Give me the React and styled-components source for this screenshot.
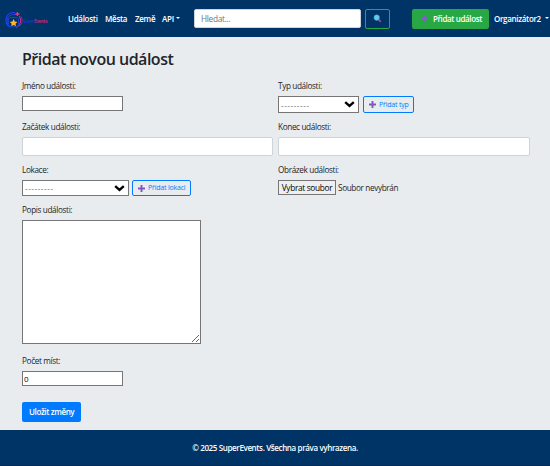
import React from "react";
import styled, { createGlobalStyle } from "styled-components";

const GlobalStyle = createGlobalStyle`
  * { box-sizing: border-box; }
  body {
    margin: 0;
    background: #e9ecef;
    color: #212529;
    font-family: "Open Sans", "Noto Sans", sans-serif;
    font-size: 8px;
    line-height: 12px;
  }
  input, select, textarea, button { font: inherit; margin: 0; }
`;

const Page = styled.div`
  display: flex;
  flex-direction: column;
  height: 466px;
  overflow: hidden;
`;

const Navbar = styled.nav`
  display: flex;
  align-items: center;
  height: 37px;
  flex: none;
  padding-left: 4px;
  background: #003366;
  white-space: nowrap;
`;

const Logo = styled.svg`
  width: 46px;
  height: 20px;
  margin-right: 18px;
  flex: none;
`;

const NavLinks = styled.div`
  display: flex;
  width: 126px;
  flex: none;
`;

const NavLink = styled.a`
  width: ${(p) => p.$width}px;
  flex: none;
  color: #fff;
  font-weight: 600;
  letter-spacing: ${(p) => p.$spacing || 0}px;
`;

const UserMenu = styled(NavLink)`
  margin-left: 5px;
`;

const Caret = styled.span`
  display: inline-block;
  margin-left: ${(p) => p.$gap}px;
  vertical-align: 2.5px;
  border: 2.4px solid transparent;
  border-top-color: #fff;
  border-bottom: 0;
`;

const SearchInput = styled.input`
  width: 167px;
  height: 19px;
  flex: none;
  padding: 0 6px;
  border: 1px solid #ced4da;
  border-radius: 2px;
  font-size: 8.3px;
  letter-spacing: -0.3px;
  &::placeholder { color: #6c757d; opacity: 1; }
`;

const SearchButton = styled.button`
  display: flex;
  align-items: center;
  justify-content: center;
  width: 25px;
  height: 20px;
  margin: 0 22px 0 4px;
  padding: 0;
  flex: none;
  background: transparent;
  border: 1px solid #28a745;
  border-radius: 2px;
`;

const Button = styled.button`
  display: flex;
  align-items: center;
  width: ${(p) => p.$width}px;
  height: 20px;
  padding: 0 0 0 ${(p) => p.$inset}px;
  flex: none;
  gap: 4px;
  border: 0;
  border-radius: 2px;
  background: ${(p) => p.$color};
  color: #fff;
  font-weight: 600;
  letter-spacing: -0.38px;
  white-space: nowrap;
`;

const OutlineButton = styled(Button)`
  height: ${(p) => p.$height}px;
  gap: 2px;
  border: 1px solid #007bff;
  background: transparent;
  color: #007bff;
  font-size: 7px;
  font-weight: 400;
  letter-spacing: -0.2px;
`;

const Main = styled.main`
  height: 393px;
  flex: none;
  padding: 12px 20px 0 22px;
`;

const Title = styled.h1`
  margin: 0 0 11px;
  height: 20px;
  font-size: 16px;
  line-height: 20px;
  font-weight: 600;
  letter-spacing: -0.5px;
  white-space: nowrap;
`;

const Form = styled.form`
  display: grid;
  grid-template-columns: 251px 252px;
  grid-template-rows: 41px 43px 40px 151px 47px 20px;
  column-gap: 5px;
  align-items: start;
`;

const Field = styled.div`
  grid-column: ${(p) => (p.$wide ? "1 / -1" : "auto")};
  display: flex;
  flex-direction: column;
  align-items: flex-start;
  gap: 4px;
`;

const Label = styled.label`
  height: 12px;
  font-size: 8.2px;
  letter-spacing: -0.36px;
  white-space: nowrap;
`;

const Row = styled.div`
  display: flex;
  gap: ${(p) => p.$gap}px;
`;

const PlainInput = styled.input`
  width: 101px;
  height: 15px;
  padding: 1px;
  background: #fff;
  border: 1px solid #767676;
  border-radius: 0;
`;

const DateInput = styled.input`
  width: 100%;
  height: 19px;
  background: #fff;
  border: 1px solid #ced4da;
  border-radius: 2px;
`;

const Select = styled.div`
  display: flex;
  align-items: center;
  justify-content: space-between;
  width: ${(p) => p.$width}px;
  height: ${(p) => p.$height}px;
  padding: 0 3px 0 2px;
  background: #fff;
  border: 1px solid #767676;
  color: #555;
  letter-spacing: 0.6px;
`;

const TextArea = styled.textarea`
  display: block;
  width: 179px;
  height: 124px;
  border: 1px solid #767676;
  border-radius: 0;
  background: #fff;
  resize: both;
`;

const FileButton = styled.button`
  width: 58px;
  height: 15px;
  padding: 0;
  border: 1px solid #767676;
  background: #efefef;
  color: #000;
  font-size: 8.3px;
  line-height: 12px;
  letter-spacing: -0.32px;
  white-space: nowrap;
`;

const FileName = styled.span`
  font-size: 8.2px;
  line-height: 16px;
  letter-spacing: -0.36px;
  white-space: nowrap;
`;

const Footer = styled.footer`
  flex: 1;
  padding-top: 12px;
  background: #003366;
  border-bottom: 1px solid #002b5b;
  color: #fff;
  font-weight: 600;
  letter-spacing: -0.37px;
  text-align: center;
`;

const Plus = ({ color = "#7e57c2" }) => (
  <svg width="9" height="9" viewBox="0 0 9 9">
    <path d="M4.5 1v7M1 4.5h7" stroke={color} strokeWidth="1.9" />
  </svg>
);

const Chevron = () => (
  <svg width="11" height="7" viewBox="0 0 11 7">
    <path d="M1.2 1.2 5.5 5l4.3-3.8" fill="none" stroke="#000" strokeWidth="2.4" />
  </svg>
);

const App = () => (
  <>
    <GlobalStyle />
    <Page>
      <Navbar>
        <Logo viewBox="0 0 46 20">
          <g fill="none">
            <path d="M6 18A7.8 7.8 0 0 1 8.5 3.5h2.5" stroke="#1b43f0" strokeWidth="1.2" />
            <path d="M4 15A6.2 6.2 0 0 1 9 5.6h3" stroke="#4a35c8" />
            <path d="M15.2 7a7.6 7.6 0 0 1-3 11.5" stroke="#c02c8a" strokeWidth="1.1" />
            <path d="M17 7.5a8 8 0 0 1-1.2 9.5" stroke="#7b35b0" strokeWidth=".9" />
            <rect x="4.4" y="8.5" width="10.2" height="9.3" rx="2.5" stroke="#1644cc" />
            <path d="M13.4 3v4M11.4 5h4" stroke="#f03080" strokeWidth="1.3" />
          </g>
          <path d="m9.6 10.1 1.2 2.4 2.6.4-1.9 1.8.5 2.6-2.4-1.2-2.4 1.2.5-2.6-1.9-1.8 2.6-.4z" fill="#ffb52e" />
          <text x="19" y="14" fontSize="4.8" fill="#173fd0" textLength="11">Super</text>
          <text x="30" y="14" fontSize="4.8" fontWeight="600" fill="#d02a80" textLength="13.5">Events</text>
        </Logo>
        <NavLinks>
          <NavLink $width={37} $spacing={-0.3}>Události</NavLink>
          <NavLink $width={30} $spacing={-0.3}>Města</NavLink>
          <NavLink $width={27} $spacing={-0.3}>Země</NavLink>
          <NavLink $width={32} $spacing={-0.2}>API<Caret $gap={2} /></NavLink>
        </NavLinks>
        <SearchInput placeholder="Hledat..." />
        <SearchButton type="button" aria-label="Hledat">
          <svg width="9" height="9" viewBox="0 0 9 9">
            <path d="m5.5 5.5 2.3 2.3" stroke="#984c91" strokeWidth="1.8" />
            <circle cx="3.7" cy="3.6" r="2.8" fill="#65c9ee" stroke="#3a91bd" strokeWidth=".5" />
          </svg>
        </SearchButton>
        <Button type="button" $width={77} $inset={8} $color="#28a745">
          <Plus color="#8a58d0" />Přidat událost
        </Button>
        <UserMenu $width={56} $spacing={-0.32}>Organizátor2<Caret $gap={4} /></UserMenu>
      </Navbar>
      <Main>
        <Title>Přidat novou událost</Title>
        <Form>
          <Field>
            <Label>Jméno události:</Label>
            <PlainInput />
          </Field>
          <Field>
            <Label>Typ události:</Label>
            <Row $gap={4}>
              <Select $width={81} $height={17}>---------<Chevron /></Select>
              <OutlineButton type="button" $width={51} $height={17} $inset={4}><Plus />Přidat typ</OutlineButton>
            </Row>
          </Field>
          <Field>
            <Label>Začátek události:</Label>
            <DateInput />
          </Field>
          <Field>
            <Label>Konec události:</Label>
            <DateInput />
          </Field>
          <Field>
            <Label>Lokace:</Label>
            <Row $gap={3}>
              <Select $width={107} $height={16}>---------<Chevron /></Select>
              <OutlineButton type="button" $width={59} $height={16} $inset={4}><Plus />Přidat lokaci</OutlineButton>
            </Row>
          </Field>
          <Field>
            <Label>Obrázek události:</Label>
            <Row $gap={2}>
              <FileButton type="button">Vybrat soubor</FileButton>
              <FileName>Soubor nevybrán</FileName>
            </Row>
          </Field>
          <Field $wide>
            <Label>Popis události:</Label>
            <TextArea />
          </Field>
          <Field $wide>
            <Label>Počet míst:</Label>
            <PlainInput defaultValue="0" />
          </Field>
          <Button type="button" $width={59} $inset={7} $color="#007bff">Uložit změny</Button>
        </Form>
      </Main>
      <Footer>© 2025 SuperEvents. Všechna práva vyhrazena.</Footer>
    </Page>
  </>
);

export default App;
